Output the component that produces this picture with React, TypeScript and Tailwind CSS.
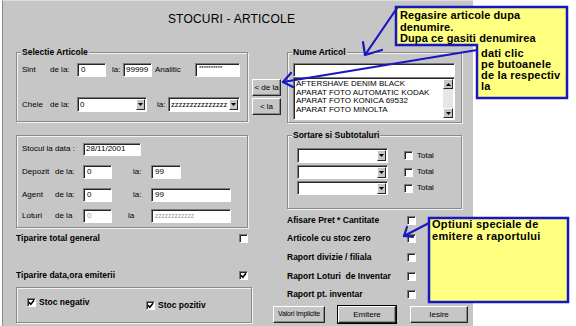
import React from "react";

const items = [
  "AFTERSHAVE DENIM BLACK",
  "APARAT FOTO AUTOMATIC KODAK",
  "APARAT FOTO KONICA 69532",
  "APARAT FOTO MINOLTA",
];

const options = [
  { label: "Afisare Pret * Cantitate", mt: "mt-[6px]" },
  { label: "Articole cu stoc zero", mt: "mt-[7px]" },
  { label: "Raport divizie / filiala", mt: "mt-[8px]" },
  { label: "Raport Loturi  de Inventar", mt: "mt-[8px]" },
  { label: "Raport pt. inventar", mt: "mt-[7px]" },
];

type Kids = { className?: string; children?: React.ReactNode };

// sunken white field, win95 style
const Sunken = ({ className = "", children }: Kids) => (
  <div
    className={`bg-white border border-t-[#7b7b7b] border-l-[#7b7b7b] border-b-white border-r-white shadow-[inset_1px_1px_0_#262626] flex items-center shrink-0 ${className}`}
  >
    {children}
  </div>
);

const Btn = ({ className = "", children }: Kids) => (
  <div
    className={`h-[17px] flex items-center justify-center bg-[#c6c6c6] border border-t-white border-l-white border-b-[#262626] border-r-[#262626] shadow-[inset_-1px_-1px_0_#8a8a8a] whitespace-nowrap shrink-0 ${className}`}
  >
    {children}
  </div>
);

const Check = ({ checked = false }: { checked?: boolean }) => (
  <div className="w-[9px] h-[9px] bg-white border border-t-[#7b7b7b] border-l-[#7b7b7b] border-b-white border-r-white shadow-[inset_1px_1px_0_#262626] flex items-center justify-center shrink-0">
    {checked && (
      <svg width="7" height="7" viewBox="0 0 7 7">
        <path d="M1 3.2l1.8 2L6 1.2" stroke="#000" strokeWidth="1.6" fill="none" />
      </svg>
    )}
  </div>
);

const DropBtn = () => (
  <div className="w-[9px] h-[11px] bg-[#c6c6c6] border border-t-white border-l-white border-b-[#262626] border-r-[#262626] flex items-center justify-center shrink-0">
    <svg width="5" height="3" viewBox="0 0 5 3">
      <path d="M0 0H5L2.5 3Z" fill="#000" />
    </svg>
  </div>
);

const Combo = ({ className = "", value = "" }: { className?: string; value?: string }) => (
  <Sunken className={`pl-[2px] pr-[1px] justify-between ${className}`}>
    <span className="leading-none">{value}</span>
    <DropBtn />
  </Sunken>
);

const groupCls =
  "border border-[#8a8a8a] shadow-[inset_1px_1px_0_#f2f2f2,1px_1px_0_#f2f2f2]";
const legendCls = "text-[8.5px] font-bold leading-[9px] px-[1px] -ml-[1px] bg-[#c6c6c6]";

export default function App() {
  return (
    <div className="relative flex w-[576px] h-[326px] bg-white overflow-hidden font-['Liberation_Sans',Arial,sans-serif] text-black text-[8px]">
      {/* Dialog */}
      <div className="ml-[2px] w-[471px] h-full bg-[#c6c6c6] border-l border-t border-l-[#8a8a8a] border-t-[#dedede] flex flex-col">
        <div className="h-[47px] pt-[11px] pr-[13px] text-center text-[12px] leading-[14px] tracking-[0.2px]">
          STOCURI - ARTICOLE
        </div>

        <div className="flex pl-[13px]">
          {/* Left column */}
          <div className="w-[236px] flex flex-col">
            <fieldset className={`w-[232px] h-[74px] pl-[5px] pt-[6px] ${groupCls}`}>
              <legend className={legendCls}>Selectie Articole</legend>
              <div className="flex items-center h-[14px]">
                <span className="w-[28px]">Sint</span>
                <span className="w-[27px]">de la:</span>
                <Sunken className="w-[29px] h-[14px] pl-[3px]">0</Sunken>
                <span className="ml-[6px] w-[11px]">la:</span>
                <Sunken className="w-[29px] h-[14px] pl-[2px]">99999</Sunken>
                <span className="ml-[3px] w-[40px]">Analitic</span>
                <Sunken className="w-[45px] h-[14px] pl-[3px] items-start pt-[1px]">
                  <span className="text-[6px] leading-[6px]">**********</span>
                </Sunken>
              </div>
              <div className="flex items-center h-[15px] mt-[20px]">
                <span className="w-[28px]">Cheie</span>
                <span className="w-[27px]">de la:</span>
                <Combo className="w-[70px] h-[15px]" value="0" />
                <span className="ml-[10px] w-[11px]">la:</span>
                <Combo className="w-[72px] h-[15px] text-[7.5px]" value="zzzzzzzzzzzzzzz" />
              </div>
            </fieldset>

            <div className={`mt-[13px] w-[232px] h-[93px] pl-[5px] pt-[6px] flex flex-col ${groupCls}`}>
              <div className="flex items-center h-[14px]">
                <span className="w-[61px]">Stocul la data :</span>
                <Sunken className="w-[58px] h-[13px] pl-[2px]">28/11/2001</Sunken>
              </div>
              <div className="flex items-center h-[14px] mt-[9px]">
                <span className="w-[33px]">Depozit</span>
                <span className="w-[28px]">de la:</span>
                <Sunken className="w-[29px] h-[14px] pl-[3px]">0</Sunken>
                <span className="ml-[21px] w-[18px]">la:</span>
                <Sunken className="w-[30px] h-[14px] pl-[3px]">99</Sunken>
              </div>
              <div className="flex items-center h-[14px] mt-[9px]">
                <span className="w-[33px]">Agent</span>
                <span className="w-[28px]">de la:</span>
                <Sunken className="w-[29px] h-[14px] pl-[3px]">0</Sunken>
                <span className="ml-[21px] w-[18px]">la:</span>
                <Sunken className="w-[80px] h-[14px] pl-[3px]">99</Sunken>
              </div>
              <div className="flex items-center h-[14px] mt-[7px]">
                <span className="w-[33px]">Loturi</span>
                <span className="w-[28px]">de la</span>
                <Sunken className="w-[29px] h-[14px] pl-[3px] text-[#9a9a9a]">0</Sunken>
                <span className="ml-[16px] w-[23px]">la</span>
                <Sunken className="w-[80px] h-[14px] pl-[3px] text-[#9a9a9a] text-[6.5px]">
                  zzzzzzzzzzzz
                </Sunken>
              </div>
            </div>

            <div className="mt-[5px] w-[232px] h-[11px] flex items-center justify-between">
              <span className="text-[8.5px] font-bold">Tiparire total general</span>
              <Check />
            </div>
            <div className="mt-[26px] w-[232px] h-[11px] flex items-center justify-between">
              <span className="text-[8.5px] font-bold">Tiparire data,ora emiterii</span>
              <Check checked />
            </div>

            <div className={`mt-[6px] w-[236px] h-[36px] pl-[10px] pt-[10px] flex items-start ${groupCls}`}>
              <div className="w-[119px] flex items-center gap-[3px]">
                <Check checked />
                <span className="text-[8.5px] font-bold leading-[9px]">Stoc negativ</span>
              </div>
              <div className="mt-[3px] flex items-center gap-[3px]">
                <Check checked />
                <span className="text-[8.5px] font-bold leading-[9px]">Stoc pozitiv</span>
              </div>
            </div>
          </div>

          {/* Right column */}
          <div className="w-[216px] flex flex-col">
            <div className="flex">
              <div className="w-[35px] pt-[31px] flex flex-col gap-[2px]">
                <Btn className="w-[29px] text-[8px]">&lt; de la</Btn>
                <Btn className="w-[29px] text-[8px]">&lt; la</Btn>
              </div>
              <fieldset className={`w-[175px] h-[75px] pl-[5px] pt-[6px] ${groupCls}`}>
                <legend className={legendCls}>Nume Articol</legend>
                <Sunken className="w-[162px] h-[14px]" />
                <Sunken className="w-[162px] h-[43px] items-stretch">
                  <div className="flex-1 pl-[2px] pt-[2px] leading-[8.7px] text-[8px] overflow-hidden">
                    {items.map((it) => (
                      <div key={it} className="whitespace-nowrap">
                        {it}
                      </div>
                    ))}
                  </div>
                  <div className="w-[10px] flex flex-col bg-[#e6e6e6] mr-[1px] my-[1px]">
                    <div className="h-[10px] bg-[#c6c6c6] border border-t-white border-l-white border-b-[#262626] border-r-[#262626] flex items-center justify-center">
                      <svg width="5" height="3" viewBox="0 0 5 3">
                        <path d="M0 3H5L2.5 0Z" fill="#000" />
                      </svg>
                    </div>
                    <div className="flex-1" />
                    <div className="h-[10px] bg-[#c6c6c6] border border-t-white border-l-white border-b-[#262626] border-r-[#262626] flex items-center justify-center">
                      <svg width="5" height="3" viewBox="0 0 5 3">
                        <path d="M0 0H5L2.5 3Z" fill="#000" />
                      </svg>
                    </div>
                  </div>
                </Sunken>
              </fieldset>
            </div>

            <fieldset className={`ml-[35px] mt-[8px] w-[175px] h-[78px] pl-[5px] pt-[8px] ${groupCls}`}>
              <legend className={legendCls}>Sortare si Subtotaluri</legend>
              <div className="ml-[4px] flex flex-col gap-[2px]">
                {["h-[15px]", "h-[14px]", "h-[14px]"].map((h, i) => (
                  <div key={i} className="flex items-center">
                    <Combo className={`w-[91px] ${h}`} />
                    <div className="ml-[16px]">
                      <Check />
                    </div>
                    <span className="ml-[4px]">Total</span>
                  </div>
                ))}
              </div>
            </fieldset>

            {options.map((o) => (
              <div key={o.label} className={`${o.mt} pl-[35px] h-[11px] flex items-center`}>
                <span className="w-[120px] text-[8.5px] font-bold whitespace-pre">{o.label}</span>
                <Check />
              </div>
            ))}

            <div className="mt-[5px] ml-[21px] flex items-center">
              <Btn className="w-[52px] text-[7px] tracking-[-0.2px]">Valori Implicite</Btn>
              <div className="ml-[12px] border border-black">
                <Btn className="w-[58px] h-[15px] text-[8px]">Emitere</Btn>
              </div>
              <Btn className="ml-[13px] w-[58px] text-[8px]">Iesire</Btn>
            </div>
          </div>
        </div>
      </div>

      {/* Callouts and arrows */}
      <svg
        className="absolute left-0 top-0 pointer-events-none"
        width="576"
        height="326"
        viewBox="0 0 576 326"
      >
        <polygon
          points="396,7 567,7 567,98 477,98 477,45 396,45"
          fill="#ffff80"
          stroke="#1717c4"
          strokeWidth="2.5"
        />
        <rect x="429" y="218" width="139" height="84" fill="#ffff80" stroke="#1717c4" strokeWidth="2.5" />
        <g stroke="#1717c4" strokeWidth="2.2" fill="none" strokeLinecap="round" strokeLinejoin="round">
          <path d="M397 8L365 55" />
          <path d="M363 42L365 55L382 50" />
          <path d="M477 50L283 82" />
          <path d="M291 73L283 82L293 87" />
          <path d="M429 223L404 236" />
          <path d="M407 227L404 236L413 237" />
        </g>
      </svg>

      <div className="absolute left-[400px] top-[10px] text-[11px] leading-[11.5px] font-bold tracking-[0.1px]">
        <div>Regasire articole dupa</div>
        <div>denumire.</div>
        <div>Dupa ce gasiti denumirea</div>
      </div>
      <div className="absolute left-[481px] top-[48px] text-[11px] leading-[11px] font-bold tracking-[0.2px]">
        <div>dati clic</div>
        <div>pe butoanele</div>
        <div>de la respectiv</div>
        <div>la</div>
      </div>
      <div className="absolute left-[432px] top-[219px] text-[11px] leading-[11.5px] font-bold tracking-[0.3px]">
        <div>Optiuni speciale de</div>
        <div>emitere a raportului</div>
      </div>
    </div>
  );
}
